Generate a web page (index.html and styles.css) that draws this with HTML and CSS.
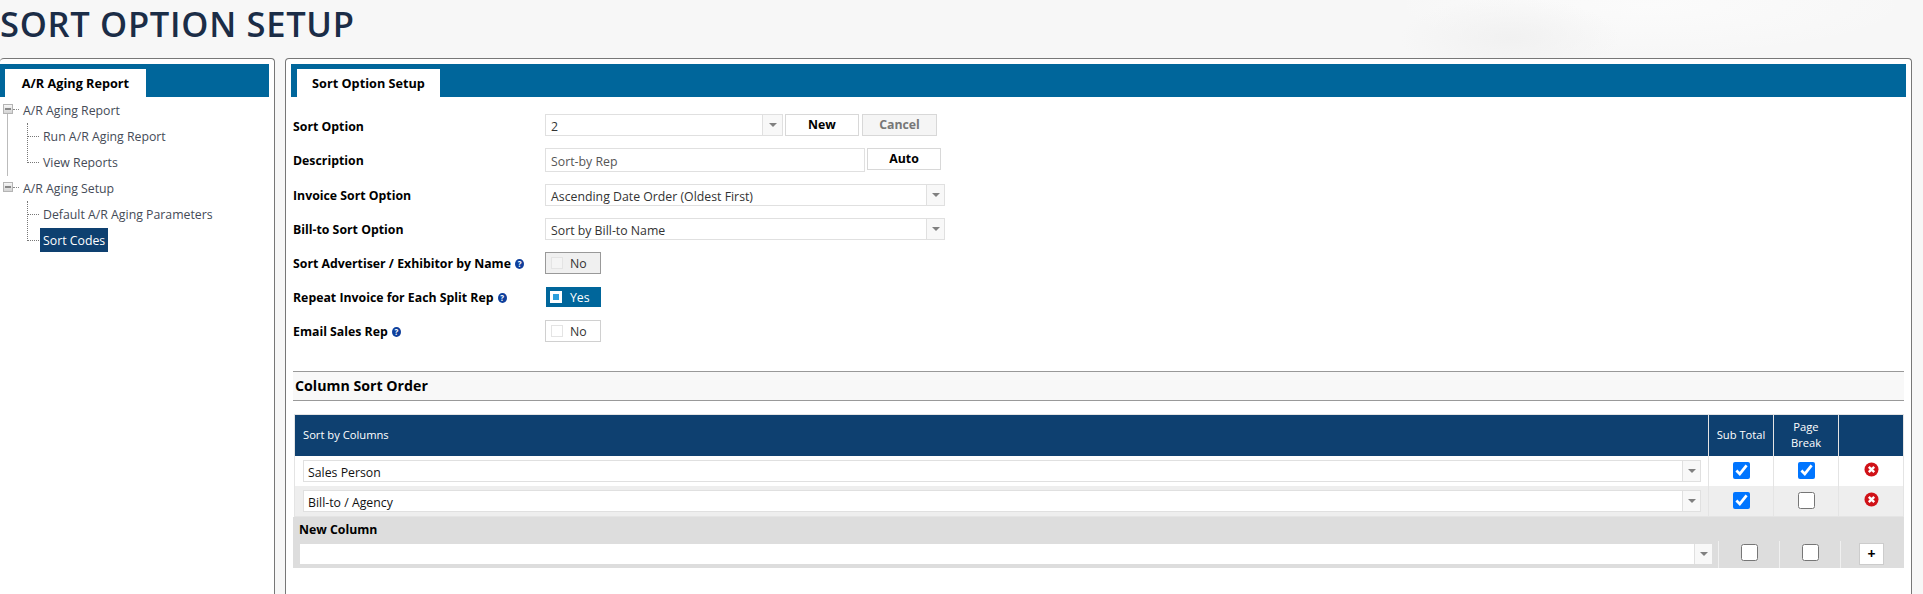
FILE: index.html
```html
<!DOCTYPE html>
<html>
<head>
    <title>Sort Option Setup</title>
    <link rel="stylesheet" href="styles.css">
</head>
<body>
    <h1 class="page-title">SORT OPTION SETUP</h1>
    <div class="panels">
        <div class="panel panel-left">
            <div class="tabbar tabbar-left"><div class="tab tab-left">A/R Aging Report</div></div>
            <ul class="tree">
                <li class="tree-group first-group">
                    <span class="minus"></span><span class="node node-top">A/R Aging Report</span>
                    <ul class="tree-sub">
                        <li><span class="node">Run A/R Aging Report</span></li>
                        <li><span class="node">View Reports</span></li>
                    </ul>
                </li>
                <li class="tree-group">
                    <span class="minus"></span><span class="node node-top">A/R Aging Setup</span>
                    <ul class="tree-sub">
                        <li><span class="node">Default A/R Aging Parameters</span></li>
                        <li><span class="node node-active">Sort Codes</span></li>
                    </ul>
                </li>
            </ul>
        </div>
        <div class="panel panel-right">
            <div class="tabbar"><div class="tab tab-right">Sort Option Setup</div></div>
            <div class="content">
                <div class="form">
                    <div class="row row-high">
                        <div class="label">Sort Option</div>
                        <div class="select select-short"><span class="select-text">2</span><span class="arrow"><i></i></span></div>
                        <div class="btn btn-new">New</div>
                        <div class="btn btn-cancel">Cancel</div>
                    </div>
                    <div class="row row-high row-desc">
                        <div class="label">Description</div>
                        <div class="input">Sort-by Rep</div>
                        <div class="btn btn-auto">Auto</div>
                    </div>
                    <div class="row">
                        <div class="label">Invoice Sort Option</div>
                        <div class="select select-long"><span class="select-text">Ascending Date Order (Oldest First)</span><span class="arrow"><i></i></span></div>
                    </div>
                    <div class="row">
                        <div class="label">Bill-to Sort Option</div>
                        <div class="select select-long"><span class="select-text">Sort by Bill-to Name</span><span class="arrow"><i></i></span></div>
                    </div>
                    <div class="row">
                        <div class="label">Sort Advertiser / Exhibitor by Name <span class="help">?</span></div>
                        <div class="toggle toggle-focus"><span class="toggle-box"></span>No</div>
                    </div>
                    <div class="row">
                        <div class="label">Repeat Invoice for Each Split Rep <span class="help">?</span></div>
                        <div class="toggle toggle-on"><span class="toggle-box"></span>Yes</div>
                    </div>
                    <div class="row">
                        <div class="label">Email Sales Rep <span class="help">?</span></div>
                        <div class="toggle"><span class="toggle-box"></span>No</div>
                    </div>
                </div>

                <div class="section-head">Column Sort Order</div>

                <table class="sort-table">
                    <tr>
                        <th class="col-name">Sort by Columns</th>
                        <th class="col-check">Sub Total</th>
                        <th class="col-check">Page<br>Break</th>
                        <th class="col-check"></th>
                    </tr>
                    <tr class="row-one">
                        <td class="cell-name"><div class="select select-full"><span class="select-text text-dark">Sales Person</span><span class="arrow"><i></i></span></div></td>
                        <td><input type="checkbox" class="check" checked></td>
                        <td><input type="checkbox" class="check" checked></td>
                        <td><svg class="remove" width="15" height="15" viewBox="0 0 15 15"><circle cx="7.5" cy="7.5" r="7" fill="#d01218"/><path d="M4.8 4.8l5.4 5.4M10.2 4.8l-5.4 5.4" stroke="#fff" stroke-width="2.4"/></svg></td>
                    </tr>
                    <tr class="row-two">
                        <td class="cell-name"><div class="select select-full"><span class="select-text text-dark">Bill-to / Agency</span><span class="arrow"><i></i></span></div></td>
                        <td><input type="checkbox" class="check" checked></td>
                        <td><input type="checkbox" class="check"></td>
                        <td><svg class="remove" width="15" height="15" viewBox="0 0 15 15"><circle cx="7.5" cy="7.5" r="7" fill="#d01218"/><path d="M4.8 4.8l5.4 5.4M10.2 4.8l-5.4 5.4" stroke="#fff" stroke-width="2.4"/></svg></td>
                    </tr>
                </table>

                <div class="new-col">
                    <div class="new-col-title">New Column</div>
                    <div class="new-col-row">
                        <div class="new-cell new-cell-name"><div class="select select-blank"><span class="select-text"></span><span class="arrow"><i></i></span></div></div>
                        <div class="new-cell"><input type="checkbox" class="check"></div>
                        <div class="new-cell"><input type="checkbox" class="check"></div>
                        <div class="new-cell new-cell-last"><div class="plus">+</div></div>
                    </div>
                </div>
            </div>
        </div>
    </div>
</body>
</html>
```

FILE: styles.css
```css
* {
    margin: 0;
    padding: 0;
    box-sizing: border-box;
}
html, body {
    height: 100%;
    overflow: hidden;
}
body {
    font-family: "Open Sans", "Noto Sans", sans-serif;
    font-size: 12.3px;
    color: #000;
    background-color: #f7f7f7;
    background-image:
        radial-gradient(ellipse 110px 40px at 1510px 38px, #f1f1f1, transparent),
        radial-gradient(ellipse 260px 50px at 1650px 5px, #fbfbfb, transparent);
}
.page-title {
    height: 58px;
    padding-top: 2px;
    font-size: 34.5px;
    line-height: 44px;
    font-weight: 600;
    letter-spacing: 0.7px;
    color: #1b2d47;
    white-space: nowrap;
}

.panels {
    display: flex;
    gap: 10px;
    height: calc(100% - 58px);
    padding-right: 13px;
}
.panel {
    background: #fff;
    border: 1px solid #777;
    border-bottom: 0;
    border-radius: 4px 4px 0 0;
    padding-top: 5px;
}
.panel-left {
    width: 275px;
    flex: none;
    border-left: 0;
    padding-right: 5px;
}
.panel-right {
    flex: 1;
    padding-left: 5px;
    padding-right: 5px;
}

.tabbar {
    height: 33px;
    background: #00669b;
    padding: 5px 0 0 6px;
}
.tabbar-left {
    padding-left: 5px;
}
.tab {
    height: 28px;
    line-height: 28px;
    background: #fff;
    font-size: 12.7px;
    font-weight: 700;
    text-align: center;
}
.tab-left {
    width: 141px;
}
.tab-right {
    width: 143px;
}

/* tree */
.tree, .tree-sub {
    list-style: none;
}
.tree-group {
    position: relative;
}
.tree-group > .node-top {
    display: block;
    margin-left: 23px;
    height: 26px;
    line-height: 28px;
}
.node {
    color: #454b57;
}
.minus {
    position: absolute;
    left: 3px;
    top: 7px;
    width: 10px;
    height: 10px;
    border: 1px solid #b4b4b4;
    background: linear-gradient(#f6f6f6, #d4d4d4);
}
.minus::after {
    content: "";
    position: absolute;
    left: 1px;
    top: 3px;
    width: 6px;
    height: 2px;
    background: #888;
}
.minus::before {
    content: "";
    position: absolute;
    left: 9px;
    top: 4px;
    width: 6px;
    border-top: 1px dotted #888;
}
.first-group::before {
    content: "";
    position: absolute;
    left: 7px;
    top: 17px;
    height: 62px;
    border-left: 1px solid #bbb;
}
.tree-sub li {
    position: relative;
    height: 26px;
    line-height: 28px;
    padding-left: 43px;
}
.tree-sub li::before {
    content: "";
    position: absolute;
    left: 27px;
    top: -13px;
    width: 11px;
    height: 26px;
    border-left: 1px dotted #777;
    border-bottom: 1px dotted #777;
}
.tree-sub li:first-child::before {
    top: 0;
    height: 13px;
}
.node-active {
    display: inline-block;
    margin-left: -3px;
    padding: 0 3px;
    height: 24px;
    line-height: 26px;
    background: #0e4070;
    color: #fff;
}

/* form */
.content {
    padding: 17px 2px 0;
}
.row {
    display: flex;
    align-items: flex-start;
    height: 34px;
}
.row-desc {
    height: 36px;
}
.label {
    width: 252px;
    flex: none;
    height: 24px;
    line-height: 24px;
    font-weight: 700;
    white-space: nowrap;
}
.row-high .label {
    line-height: 26px;
}
.help {
    display: inline-block;
    width: 9px;
    height: 10px;
    margin-left: 1px;
    border-radius: 50%;
    background: #0e3f9c;
    color: #fff;
    font-size: 8px;
    line-height: 10px;
    text-align: center;
    vertical-align: 1px;
}
.select {
    display: flex;
    height: 22px;
    background: #fff;
    border: 1px solid #e0e0e0;
    text-align: left;
}
.select-short {
    width: 238px;
}
.select-short .arrow {
    width: 20px;
}
.select-long {
    width: 400px;
}
.select-full {
    width: 100%;
}
.select-blank {
    width: 100%;
    height: 20px;
    border: 0;
}
.select-text {
    flex: 1;
    padding-left: 5px;
    line-height: 23px;
    color: #333;
    white-space: nowrap;
}
.text-dark {
    color: #111;
    padding-left: 4px;
    line-height: 24px;
}
.row-high .select-text {
    line-height: 24px;
}
.arrow {
    display: flex;
    align-items: center;
    justify-content: center;
    width: 18px;
    background: #f8f8f8;
    border-left: 1px solid #e0e0e0;
}
.arrow i {
    width: 0;
    height: 0;
    border-left: 4px solid transparent;
    border-right: 4px solid transparent;
    border-top: 4px solid #808080;
}
.btn {
    width: 74px;
    height: 22px;
    line-height: 20px;
    margin-left: 2px;
    text-align: center;
    font-weight: 700;
    background: #fff;
    border: 1px solid #d8d8d8;
}
.btn-cancel {
    margin-left: 3px;
    width: 75px;
    background: #f5f5f5;
    color: #777;
}
.input {
    width: 320px;
    height: 24px;
    line-height: 26px;
    padding-left: 5px;
    color: #555;
    border: 1px solid #e0e0e0;
}
.btn-auto {
    width: 74px;
}
.toggle {
    display: flex;
    align-items: center;
    width: 56px;
    height: 22px;
    padding-left: 5px;
    color: #333;
    border: 1px solid #d0d0d0;
}
.toggle-box {
    width: 12px;
    height: 12px;
    margin-right: 7px;
    background: #fff;
    border: 1px solid #e4e4e4;
}
.toggle-focus {
    background: #f0f0f0;
    border-color: #999;
}
.toggle-focus .toggle-box {
    background: #f4f4f4;
}
.toggle-on {
    margin-top: 1px;
    margin-left: 1px;
    width: 55px;
    height: 20px;
    padding-left: 4px;
    background: #00669b;
    border: 0;
    color: #fff;
}
.toggle-on .toggle-box {
    margin-right: 8px;
    background: #2c9fdc;
    border: 3px solid #fff;
}

/* column table */
.section-head {
    height: 30px;
    margin-top: 17px;
    line-height: 27px;
    padding-left: 2px;
    font-size: 14.2px;
    font-weight: 700;
    background: #f8f8f8;
    border-top: 1px solid #999;
    border-bottom: 1px solid #999;
}
.sort-table {
    width: 1610px;
    margin-top: 13px;
    margin-left: 1px;
    border-collapse: collapse;
    table-layout: fixed;
}
.sort-table th {
    height: 41px;
    background: #0e4070;
    color: #fff;
    font-size: 11.2px;
    font-weight: 400;
    line-height: 16px;
    border: 1px solid #e4e4e4;
    border-bottom: 0;
}
.sort-table .col-name {
    text-align: left;
    padding-left: 8px;
}
.col-check {
    width: 65px;
}
.sort-table td {
    text-align: center;
    border-left: 1px solid #e4e4e4;
    border-right: 1px solid #e4e4e4;
}
.row-one td {
    height: 30px;
}
.row-two td {
    height: 31px;
    background: #eee;
    border-bottom: 1px solid #e4e4e4;
}
.sort-table .cell-name {
    padding: 0 7px 0 8px;
}
.check {
    display: block;
    width: 17px;
    height: 17px;
    margin: 0 auto;
    accent-color: #0075ff;
}
.remove {
    display: block;
    margin: -3px auto 0;
}
.new-col {
    background: #ddd;
    height: 51px;
}
.new-col-title {
    height: 24px;
    line-height: 26px;
    padding-left: 6px;
    font-weight: 700;
}
.new-col-row {
    display: grid;
    grid-template-columns: 1426px 61px 61px 61px;
    height: 27px;
}
.new-cell {
    padding-top: 3px;
    border-right: 1px solid #f0f0f0;
}
.new-cell-last {
    border-right: 0;
}
.new-cell-name {
    padding-left: 7px;
    padding-right: 6px;
}
.plus {
    width: 25px;
    height: 22px;
    margin: -1px auto 0;
    background: #fff;
    border: 1px solid #ccc;
    text-align: center;
    font-size: 14px;
    font-weight: 700;
    line-height: 20px;
}
```
